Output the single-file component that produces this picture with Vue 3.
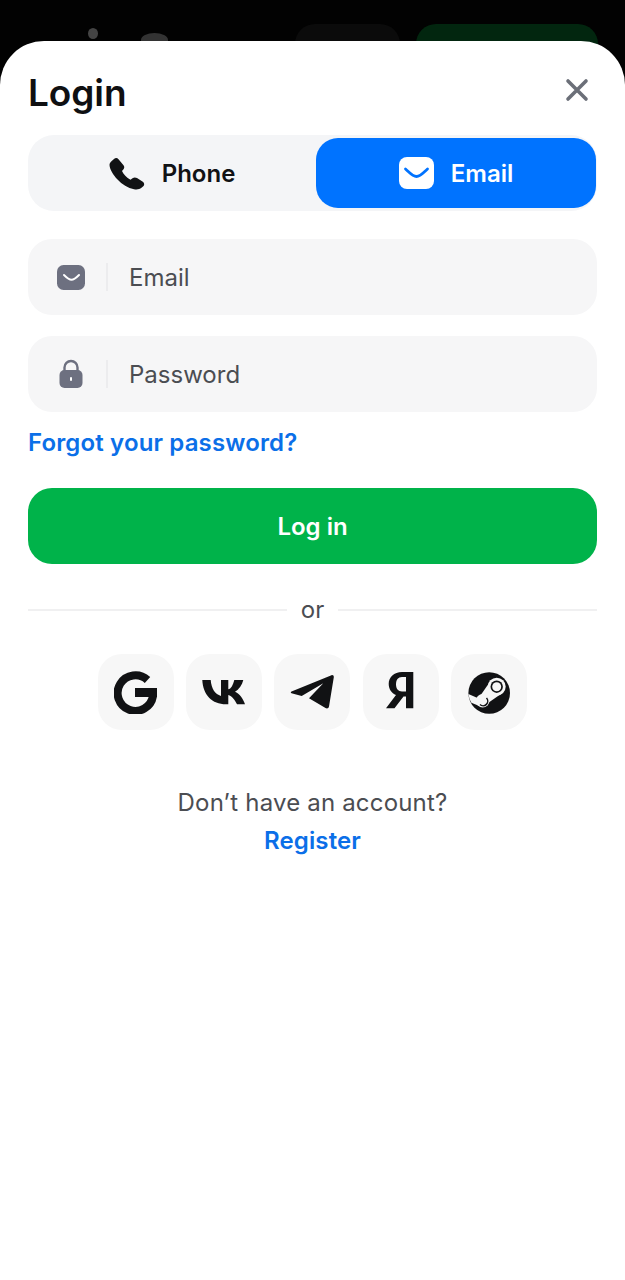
<script setup>
import { ref } from 'vue';

const email = ref('');
const password = ref('');
</script>

<template>
  <div class="page">
    <div class="backdrop">
      <span class="dot"></span>
      <span class="cap"></span>
      <span class="bg-btn"></span>
      <span class="bg-btn green"></span>
    </div>

    <div class="sheet">
      <div class="head">
        <h1 class="title">Login</h1>
        <svg class="close" width="26" height="26" viewBox="0 0 26 26">
          <path d="M4 4 22 22M22 4 4 22" stroke="#6b6f78" stroke-width="3.600" stroke-linecap="round" />
        </svg>
      </div>

      <div class="tabs">
        <button class="tab phone">
          <svg width="36" height="33" viewBox="0 0 36 33">
            <path d="M.5 8C.5 6.500 1.500 5 3 3.800L5 2C6.500 .6 8.300 .8 9.500 2.200L14.500 8.300C15.500 9.600 15.500 11 14.500 12.300L13 14C14.500 17.500 17.500 20.500 21.500 22.800L23.500 21.200C25 20.200 26.500 20.200 28 21L33.800 24.800C35.500 26 35.700 28 34.300 29.300L32.500 30.800C30.500 32.500 28 32.800 25 32.300 19 31 13 27.500 8.500 22.500 4 17.500 .8 12.500 .5 8Z" fill="#111214" />
          </svg>
          <span>Phone</span>
        </button>
        <button class="tab active">
          <svg width="35" height="32" viewBox="0 0 35 32">
            <rect width="35" height="32" rx="8" fill="#fff" />
            <path d="M6.500 12C10 15 13.500 19.500 17.500 19.500S25 15 28.500 12" fill="none" stroke="#0073ff" stroke-width="2.800" stroke-linecap="round" />
          </svg>
          <span>Email</span>
        </button>
      </div>

      <label class="field">
        <svg class="field-icon" width="28" height="25" viewBox="0 0 28 25">
          <rect width="28" height="25" rx="6.500" fill="#6d7080" />
          <path d="M7 10C9 12 12 14.800 14.500 14.800S20 12 22 10" fill="none" stroke="#fff" stroke-width="2" stroke-linecap="round" />
        </svg>
        <span class="sep"></span>
        <input v-model="email" class="input" placeholder="Email" />
      </label>

      <label class="field second">
        <svg class="field-icon" width="28" height="30" viewBox="0 0 28 30">
          <path d="M7.500 13V8.500a6.500 6.500 0 0 1 13 0V13" fill="none" stroke="#6d7080" stroke-width="2.400" />
          <rect x="2.500" y="11" width="23" height="18" rx="5" fill="#6d7080" />
          <rect x="13" y="18" width="2" height="4" rx="1" fill="#fff" />
        </svg>
        <span class="sep"></span>
        <input v-model="password" class="input" type="password" placeholder="Password" />
      </label>

      <a class="forgot">Forgot your password?</a>

      <button class="submit">Log in</button>

      <div class="divider">
        <span class="line"></span>
        <span class="or">or</span>
        <span class="line"></span>
      </div>

      <div class="socials">
        <a class="social">
          <svg width="44" height="44" viewBox="0 -1 44 44">
            <path d="M33.500 9A17.800 17.800 0 1 0 39 25" fill="none" stroke="#111214" stroke-width="8" />
            <rect x="21" y="17" width="22" height="9" fill="#111214" />
          </svg>
        </a>
        <a class="social">
          <svg width="44" height="26" viewBox="0 0 44 26">
            <path d="M.3 1H8.700C9.500 10 13 15 19 17V1H26.300V10.300C29 10 31 6 32.300 1H41.300C40 6 37 10.500 33 12.700 37 14.500 41 19 43 25.300H35C33 21 30 17 26.300 16V25.300H24C10 25.300 1 16 .3 1Z" fill="#111214" />
          </svg>
        </a>
        <a class="social">
          <svg width="44" height="36" viewBox="0 0 44 36">
            <path d="M1.500 17.600 41.500 1.200C42.800 .7 44 1.800 43.800 3.200L39 32.500C38.700 34.300 37 35 35.500 34L19 24.300 33.300 9.300 11.700 22 1.500 19.300C.5 19 .5 18 1.500 17.600Z" fill="#111214" />
          </svg>
        </a>
        <a class="social">
          <svg width="32" height="42" viewBox="-1 -.5 32 42">
            <path fill-rule="evenodd" d="M27.300 .5V36.800H20V25H17.500L8.500 36.800H0L10 23.500C5.500 21.500 2.700 17.500 2.700 12.500 2.700 5.500 8 .5 16 .5ZM20 5.500H16C12 5.500 10 8.500 10 12.800S12 20 16 20H20Z" fill="#111214" />
          </svg>
        </a>
        <a class="social">
          <svg width="44" height="44" viewBox="0 -1 44 44">
            <circle cx="22.200" cy="22" r="20.800" fill="#111214" />
            <path d="M1.400 23 14 28.500 11 34.500 4.400 31.700A20.800 20.800 0 0 1 1.400 23Z" fill="#f7f7f7" />
            <path d="M12.200 26.200 23.700 9.700 35.700 21.700 19.200 33.200Z" fill="#f7f7f7" />
            <circle cx="29.700" cy="15.700" r="9" fill="#f7f7f7" />
            <circle cx="29.700" cy="15.700" r="6.200" fill="#111214" />
            <circle cx="29.700" cy="15.700" r="4.500" fill="#f7f7f7" />
            <circle cx="15.700" cy="29.700" r="6.800" fill="#f7f7f7" />
            <path d="M19.500 27A4.600 4.600 0 0 1 13 33.500" fill="none" stroke="#111214" stroke-width="1.500" />
          </svg>
        </a>
      </div>

      <p class="no-account">Don’t have an account?</p>
      <a class="register">Register</a>
    </div>
  </div>
</template>

<style>
body {
  background: #020202;
}
</style>

<style scoped>
.page {
  width: 625px;
  height: 1280px;
  overflow: hidden;
  font-family: Inter, "Liberation Sans", sans-serif;
  background: #020202;
}

.backdrop {
  position: relative;
  height: 85px;
  margin-bottom: -44px;
  overflow: hidden;
}

.dot {
  position: absolute;
  left: 88px;
  top: 28px;
  width: 10px;
  height: 11px;
  border-radius: 50%;
  background: #444;
}

.cap {
  position: absolute;
  left: 141px;
  top: 33px;
  width: 27px;
  height: 14px;
  border-radius: 50% 50% 0 0;
  background: #333;
}

.bg-btn {
  position: absolute;
  left: 295px;
  top: 24px;
  width: 105px;
  height: 60px;
  border-radius: 20px;
  background: #0b0b0b;
}

.bg-btn.green {
  left: 416px;
  width: 182px;
  background: #02260f;
}

.sheet {
  position: relative;
  height: 1239px;
  box-sizing: border-box;
  padding: 0 28px;
  background: #fff;
  border-radius: 44px 44px 0 0;
  display: flex;
  flex-direction: column;
}

.head {
  height: 94px;
  display: flex;
  align-items: center;
  justify-content: space-between;
  padding-right: 7px;
}

.title {
  margin: 8px 0 0;
  font-size: 37px;
  font-weight: 600;
  letter-spacing: -0.1px;
  color: #0f1012;
}

.close {
  margin-top: 4px;
}

.tabs {
  height: 76px;
  box-sizing: border-box;
  padding: 3px 1px 3px 3px;
  background: #f4f5f7;
  border-radius: 26px;
  display: flex;
}

.tab {
  flex: 1;
  border: none;
  background: transparent;
  border-radius: 22px;
  display: flex;
  align-items: center;
  justify-content: center;
  gap: 17px;
  font-family: inherit;
  font-size: 24px;
  font-weight: 600;
  color: #111214;
  padding: 0;
}

.tab.phone {
  padding-right: 3px;
}

.tab.active {
  flex: none;
  width: 280px;
  background: #0073ff;
  color: #fff;
}

.field {
  height: 76px;
  margin-top: 28px;
  background: #f6f6f7;
  border-radius: 24px;
  display: flex;
  align-items: center;
  padding-left: 29px;
}

.field.second {
  margin-top: 21px;
}

.sep {
  width: 2px;
  height: 28px;
  margin: 0 21px;
  background: #ececee;
}

.input {
  flex: 1;
  min-width: 0;
  border: none;
  outline: none;
  background: transparent;
  font-family: inherit;
  font-size: 24px;
  color: #44464b;
  padding: 0;
}

.input::placeholder {
  color: #4b4d52;
  opacity: 1;
}

.forgot {
  margin-top: 16px;
  font-size: 24px;
  line-height: 29px;
  font-weight: 600;
  letter-spacing: 0.14px;
  color: #0b6fe8;
}

.submit {
  height: 76px;
  margin-top: 31px;
  border: none;
  border-radius: 24px;
  background: #00b34a;
  color: #fff;
  font-family: inherit;
  font-size: 24px;
  font-weight: 600;
}

.divider {
  margin-top: 31px;
  display: flex;
  align-items: center;
  gap: 14px;
  height: 30px;
}

.line {
  flex: 1;
  height: 2px;
  background: #f0f0f1;
}

.or {
  margin-top: -2px;
  font-size: 24px;
  color: #4b4d52;
}

.socials {
  margin-top: 29px;
  display: flex;
  justify-content: center;
  gap: 12px;
}

.social {
  width: 76px;
  height: 76px;
  border-radius: 24px;
  background: #f7f7f7;
  display: flex;
  align-items: center;
  justify-content: center;
}

.social:nth-child(4) {
  margin-left: 1px;
}

.no-account {
  margin: 58px 0 0;
  text-align: center;
  font-size: 24px;
  line-height: 30px;
  letter-spacing: 0.18px;
  color: #4b4d52;
}

.register {
  margin-top: 8px;
  text-align: center;
  font-size: 24px;
  line-height: 30px;
  font-weight: 600;
  letter-spacing: 0.1px;
  color: #0b6fe8;
}
</style>
